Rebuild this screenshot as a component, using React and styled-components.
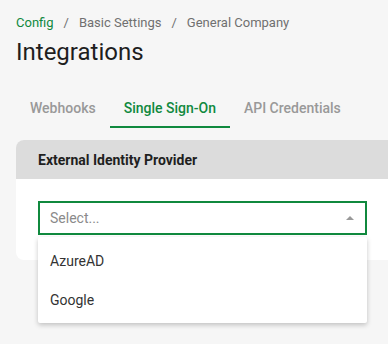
import React from 'react'
import styled, { createGlobalStyle } from 'styled-components'

const GREEN = '#10893e';

const GlobalStyle = createGlobalStyle`
    body {
        margin: 0;
        background: #f6f6f6;
        font-family: Roboto, "Liberation Sans", sans-serif;
    }
`;

const tabs = ['Webhooks', 'Single Sign-On', 'API Credentials'];
const options = ['AzureAD', 'Google'];

const App = () => {
    return (
        <Page>
            <GlobalStyle />
            <Breadcrumb>
                <Crumb active>Config</Crumb>
                <Sep>/</Sep>
                <Crumb>Basic Settings</Crumb>
                <Sep>/</Sep>
                <Crumb>General Company</Crumb>
            </Breadcrumb>
            <Title>Integrations</Title>
            <Tabs>
                {tabs.map((t) => (
                    <Tab key={t} selected={t === 'Single Sign-On'}>{t}</Tab>
                ))}
            </Tabs>
            <Card>
                <CardHeader>External Identity Provider</CardHeader>
                <CardBody>
                    <SelectWrap>
                        <SelectBox>
                            <Placeholder>Select...</Placeholder>
                            <Caret />
                        </SelectBox>
                        <Menu>
                            {options.map((o) => (
                                <Option key={o}>{o}</Option>
                            ))}
                        </Menu>
                    </SelectWrap>
                </CardBody>
            </Card>
        </Page>
    )
}

const Page = styled.div`
    width: 388px;
    height: 344px;
    overflow: hidden;
    padding: 13px 0 0 16px;
    box-sizing: border-box;
`;

const Breadcrumb = styled.div`
    display: flex;
    align-items: center;
    font-size: 13px;
    line-height: 20px;
    color: #707070;
`;

const Crumb = styled.span`
    color: ${(p) => (p.active ? GREEN : '#707070')};
`;

const Sep = styled.span`
    margin: 0 10px;
`;

const Title = styled.h1`
    margin: 4px 0 0;
    font-size: 24px;
    line-height: 30px;
    font-weight: 400;
    color: #1e1e1e;
`;

const Tabs = styled.div`
    display: flex;
    margin-top: 21px;
`;

const Tab = styled.div`
    padding: 10px 14px 8px;
    font-size: 14px;
    line-height: 20px;
    font-weight: 500;
    color: ${(p) => (p.selected ? GREEN : '#999999')};
    border-bottom: 2px solid ${(p) => (p.selected ? GREEN : 'transparent')};
`;

const Card = styled.div`
    margin-top: 12px;
    margin-right: -40px;
    background: #ffffff;
    border-radius: 8px;
`;

const CardHeader = styled.div`
    height: 39px;
    display: flex;
    align-items: center;
    padding-left: 22px;
    background: #dcdcdc;
    border-radius: 8px 8px 0 0;
    font-size: 14px;
    font-weight: 700;
    color: #1f1f1f;
`;

const CardBody = styled.div`
    padding: 22px 22px 25px;
`;

const SelectWrap = styled.div`
    position: relative;
    width: 329px;
`;

const SelectBox = styled.div`
    height: 34px;
    box-sizing: border-box;
    border: 2px solid ${GREEN};
    display: flex;
    align-items: center;
    justify-content: space-between;
    padding: 0 10px;
    background: #fff;
`;

const Placeholder = styled.span`
    font-size: 14px;
    color: #8a8a8a;
`;

const Caret = styled.span`
    width: 0;
    height: 0;
    border-left: 4px solid transparent;
    border-right: 4px solid transparent;
    border-bottom: 4px solid #999;
    margin-right: 1px;
`;

const Menu = styled.div`
    position: absolute;
    top: 36px;
    left: 0;
    right: 0;
    background: #fff;
    padding: 4px 0;
    border-radius: 2px;
    box-shadow: 0 2px 5px rgba(0, 0, 0, 0.22);
    z-index: 2;
`;

const Option = styled.div`
    height: 39px;
    display: flex;
    align-items: center;
    padding: 0 12px;
    font-size: 14px;
    color: #333333;
`;

export default App
